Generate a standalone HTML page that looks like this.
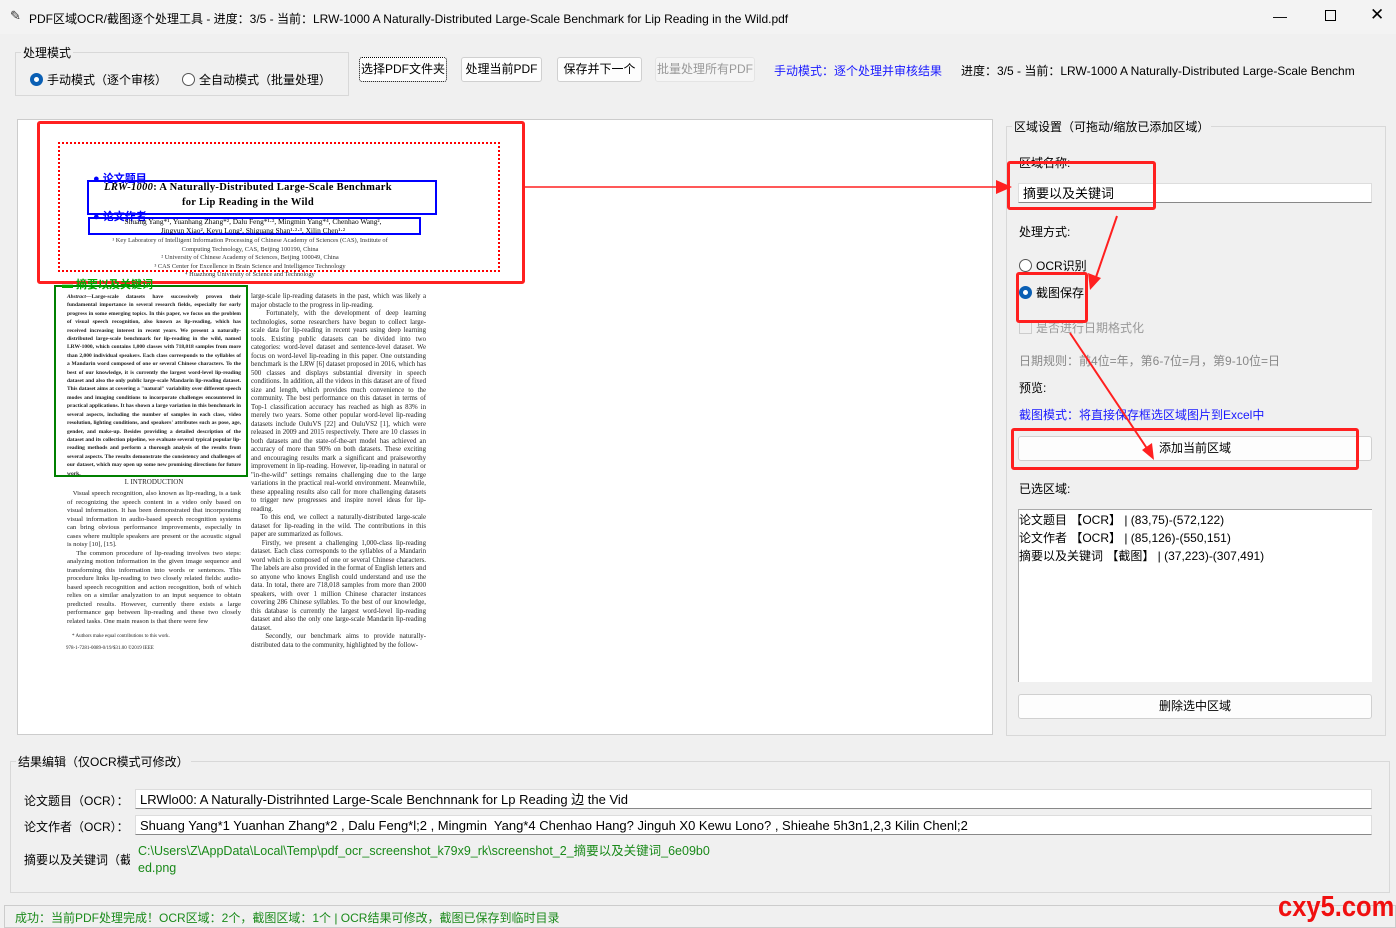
<!DOCTYPE html>
<html><head><meta charset="utf-8"><style>
*{margin:0;padding:0;box-sizing:border-box}
body{width:1396px;height:928px;background:#f0f0f0;font-family:"Liberation Sans","Noto Sans CJK SC",sans-serif;font-size:12px;color:#000;position:relative;overflow:hidden}
.a{position:absolute;white-space:nowrap}
.btn{position:absolute;background:#fdfdfd;border:1px solid #d0d0d0;border-radius:3px;text-align:center;font-size:12px}
.grp{position:absolute;border:1px solid #d8d8d8}
.lg{position:absolute;background:#f0f0f0;padding:0 2px;font-size:12px}
.radio{display:inline-block;width:13px;height:13px;border-radius:50%;border:1px solid #555;vertical-align:-2px;margin-right:4px;background:#fff}
.radio.on{border:4px solid #0a5fb4}
.col{position:absolute;font-family:"Liberation Serif",serif;font-size:6.4px;line-height:8.5px;text-align:justify;color:#222;white-space:normal}
.entry{position:absolute;background:#fff;border:1px solid #ddd;border-bottom:1px solid #888;height:20px;font-size:13px;padding:0 4px;line-height:19px;white-space:nowrap;overflow:hidden}
</style></head><body>
<div class="a" style="left:0;top:0;width:1396px;height:34px;background:#f3f3f3"></div>
<div class="a" style="left:10px;top:8px;font-size:13px;color:#333">✎</div>
<div class="a" style="left:29px;top:10px;font-size:12px">PDF区域OCR/截图逐个处理工具 - 进度：3/5 - 当前：LRW-1000 A Naturally-Distributed Large-Scale Benchmark for Lip Reading in the Wild.pdf</div>
<div class="a" style="left:1273px;top:8px;font-size:14px">—</div>
<div class="a" style="left:1325px;top:10px;width:11px;height:11px;border:1px solid #000"></div>
<div class="a" style="left:1370px;top:5px;font-size:17px">✕</div>

<div class="grp" style="left:15px;top:52px;width:334px;height:44px"></div>
<div class="lg" style="left:21px;top:44px">处理模式</div>
<div class="a" style="left:30px;top:71px"><span class="radio on"></span>手动模式（逐个审核）</div>
<div class="a" style="left:182px;top:71px"><span class="radio"></span>全自动模式（批量处理）</div>

<div class="btn" style="left:359px;top:57px;width:88px;height:25px;line-height:23px;border:1px dotted #000;background:#fdfdfd">选择PDF文件夹</div>
<div class="btn" style="left:461px;top:57px;width:81px;height:25px;line-height:23px">处理当前PDF</div>
<div class="btn" style="left:557px;top:57px;width:85px;height:25px;line-height:23px">保存并下一个</div>
<div class="btn" style="left:655px;top:57px;width:100px;height:25px;line-height:23px;color:#999;background:#f5f5f5;border-color:#e4e4e4">批量处理所有PDF</div>
<div class="a" style="left:774px;top:62px;color:#1a1aff">手动模式：逐个处理并审核结果</div>
<div class="a" style="left:961px;top:62px">进度：3/5 - 当前：LRW-1000 A Naturally-Distributed Large-Scale Benchm</div>

<!-- canvas -->
<div class="a" style="left:17px;top:119px;width:976px;height:616px;background:#fff;border:1px solid #ccc"></div>
<div class="a" style="left:37px;top:121px;width:488px;height:163px;border:3px solid #ff2020;border-radius:3px"></div>
<div class="a" style="left:58px;top:142px;width:442px;height:130px;border:2px dotted #f00"></div>
<div class="a" style="left:87px;top:180px;width:350px;height:35px;border:2px solid #0000ff"></div>
<div class="a" style="left:88px;top:217px;width:333px;height:18px;border:2px solid #0000ff"></div>
<div class="a" style="left:93px;top:170px;color:#00f;font-size:11px;font-weight:bold">● 论文题目</div>
<div class="a" style="left:93px;top:208px;color:#00f;font-size:11px;font-weight:bold">● 论文作者</div>
<div class="a" style="left:92px;top:180px;font-family:'Liberation Serif',serif;font-size:10.5px;font-weight:bold;width:312px;text-align:center;line-height:15px;white-space:normal;letter-spacing:0.3px"><i>LRW-1000</i>: A Naturally-Distributed Large-Scale Benchmark<br>for Lip Reading in the Wild</div>
<div class="a" style="left:88px;top:218px;width:330px;text-align:center;font-family:'Liberation Serif',serif;font-size:7.4px;line-height:8.5px">Shuang Yang*¹, Yuanhang Zhang*², Dalu Feng*¹·², Mingmin Yang*⁴, Chenhao Wang²,<br>Jingyun Xiao², Keyu Long², Shiguang Shan¹·²·³, Xilin Chen¹·²</div>
<div class="a" style="left:80px;top:237px;width:340px;text-align:center;font-family:'Liberation Serif',serif;font-size:6.4px;line-height:8.5px;color:#333">¹ Key Laboratory of Intelligent Information Processing of Chinese Academy of Sciences (CAS), Institute of<br>Computing Technology, CAS, Beijing 100190, China<br>² University of Chinese Academy of Sciences, Beijing 100049, China<br>³ CAS Center for Excellence in Brain Science and Intelligence Technology<br>⁴ Huazhong University of Science and Technology</div>
<div class="a" style="left:54px;top:285px;width:194px;height:192px;border:2px solid #008000"></div>
<div class="a" style="left:62px;top:276px;color:#0a0;font-size:11px;font-weight:bold">▬ 摘要以及关键词</div>
<div class="col" style="left:67px;top:293px;width:174px;font-weight:bold;font-size:5.5px;line-height:8.4px"><i>Abstract</i>—Large-scale datasets have successively proven their fundamental importance in several research fields, especially for early progress in some emerging topics. In this paper, we focus on the problem of visual speech recognition, also known as lip-reading, which has received increasing interest in recent years. We present a naturally-distributed large-scale benchmark for lip-reading in the wild, named LRW-1000, which contains 1,000 classes with 718,018 samples from more than 2,000 individual speakers. Each class corresponds to the syllables of a Mandarin word composed of one or several Chinese characters. To the best of our knowledge, it is currently the largest word-level lip-reading dataset and also the only public large-scale Mandarin lip-reading dataset. This dataset aims at covering a "natural" variability over different speech modes and imaging conditions to incorporate challenges encountered in practical applications. It has shown a large variation in this benchmark in several aspects, including the number of samples in each class, video resolution, lighting conditions, and speakers' attributes such as pose, age, gender, and make-up. Besides providing a detailed description of the dataset and its collection pipeline, we evaluate several typical popular lip-reading methods and perform a thorough analysis of the results from several aspects. The results demonstrate the consistency and challenges of our dataset, which may open up some new promising directions for future work.</div>
<div class="col" style="left:67px;top:478px;width:174px;text-align:center;font-size:7px">I. INTRODUCTION</div>
<div class="col" style="left:67px;top:490px;width:174px;font-size:6.7px">&nbsp;&nbsp;&nbsp;Visual speech recognition, also known as lip-reading, is a task of recognizing the speech content in a video only based on visual information. It has been demonstrated that incorporating visual information in audio-based speech recognition systems can bring obvious performance improvements, especially in cases where multiple speakers are present or the acoustic signal is noisy [10], [15].<br>&nbsp;&nbsp;&nbsp;The common procedure of lip-reading involves two steps: analyzing motion information in the given image sequence and transforming this information into words or sentences. This procedure links lip-reading to two closely related fields: audio-based speech recognition and action recognition, both of which relies on a similar analyzation to an input sequence to obtain predicted results. However, currently there exists a large performance gap between lip-reading and these two closely related tasks. One main reason is that there were few</div>
<div class="col" style="left:72px;top:633px;width:174px;font-size:5px">* Authors make equal contributions to this work.</div>
<div class="col" style="left:66px;top:645px;width:174px;font-size:5px">978-1-7281-0089-0/19/$31.00 ©2019 IEEE</div>
<div class="col" style="left:251px;top:293px;width:175px;font-size:6.85px">large-scale lip-reading datasets in the past, which was likely a major obstacle to the progress in lip-reading.<br>&nbsp;&nbsp;&nbsp;Fortunately, with the development of deep learning technologies, some researchers have begun to collect large-scale data for lip-reading in recent years using deep learning tools. Existing public datasets can be divided into two categories: word-level dataset and sentence-level dataset. We focus on word-level lip-reading in this paper. One outstanding benchmark is the LRW [6] dataset proposed in 2016, which has 500 classes and displays substantial diversity in speech conditions. In addition, all the videos in this dataset are of fixed size and length, which provides much convenience to the community. The best performance on this dataset in terms of Top-1 classification accuracy has reached as high as 83% in merely two years. Some other popular word-level lip-reading datasets include OuluVS [22] and OuluVS2 [1], which were released in 2009 and 2015 respectively. There are 10 classes in both datasets and the state-of-the-art model has achieved an accuracy of more than 90% on both datasets. These exciting and encouraging results mark a significant and praiseworthy improvement in lip-reading. However, lip-reading in natural or "in-the-wild" settings remains challenging due to the large variations in the practical real-world environment. Meanwhile, these appealing results also call for more challenging datasets to trigger new progresses and inspire novel ideas for lip-reading.<br>&nbsp;&nbsp;&nbsp;To this end, we collect a naturally-distributed large-scale dataset for lip-reading in the wild. The contributions in this paper are summarized as follows.<br>&nbsp;&nbsp;&nbsp;Firstly, we present a challenging 1,000-class lip-reading dataset. Each class corresponds to the syllables of a Mandarin word which is composed of one or several Chinese characters. The labels are also provided in the format of English letters and so anyone who knows English could understand and use the data. In total, there are 718,018 samples from more than 2000 speakers, with over 1 million Chinese character instances covering 286 Chinese syllables. To the best of our knowledge, this database is currently the largest word-level lip-reading dataset and also the only one large-scale Mandarin lip-reading dataset.<br>&nbsp;&nbsp;&nbsp;Secondly, our benchmark aims to provide naturally-distributed data to the community, highlighted by the follow-</div>

<!-- right panel -->
<div class="grp" style="left:1006px;top:126px;width:380px;height:610px"></div>
<div class="lg" style="left:1012px;top:118px">区域设置（可拖动/缩放已添加区域）</div>
<div class="a" style="left:1019px;top:154px">区域名称:</div>
<div class="entry" style="left:1018px;top:183px;width:354px">摘要以及关键词</div>
<div class="a" style="left:1019px;top:223px">处理方式:</div>
<div class="a" style="left:1019px;top:257px"><span class="radio"></span>OCR识别</div>
<div class="a" style="left:1019px;top:284px"><span class="radio on"></span>截图保存</div>
<div class="a" style="left:1019px;top:319px;color:#999"><span style="display:inline-block;width:13px;height:13px;border:1px solid #ccc;vertical-align:-2px;margin-right:4px"></span>是否进行日期格式化</div>
<div class="a" style="left:1019px;top:352px;color:#888">日期规则：前4位=年，第6-7位=月，第9-10位=日</div>
<div class="a" style="left:1019px;top:379px">预览:</div>
<div class="a" style="left:1019px;top:406px;color:#1a1aff">截图模式：将直接保存框选区域图片到Excel中</div>
<div class="btn" style="left:1018px;top:436px;width:354px;height:25px;line-height:23px">添加当前区域</div>
<div class="a" style="left:1019px;top:480px">已选区域:</div>
<div class="a" style="left:1018px;top:509px;width:354px;height:173px;background:#fff;border:1px solid #aaa;border-bottom:none;border-right:none;line-height:18px;padding-top:1px;font-size:12px">论文题目 【OCR】 | (83,75)-(572,122)<br>论文作者 【OCR】 | (85,126)-(550,151)<br>摘要以及关键词 【截图】 | (37,223)-(307,491)</div>
<div class="btn" style="left:1018px;top:694px;width:354px;height:25px;line-height:23px">删除选中区域</div>

<!-- red annotations -->
<div class="a" style="left:1007px;top:161px;width:149px;height:49px;border:3px solid #ff2020;border-radius:3px"></div>
<div class="a" style="left:1016px;top:272px;width:72px;height:51px;border:3px solid #ff2020;border-radius:3px"></div>
<div class="a" style="left:1011px;top:428px;width:348px;height:42px;border:3px solid #ff2020;border-radius:3px"></div>
<svg class="a" style="left:0;top:0" width="1396" height="928">
<g stroke="#ff2020" fill="#ff2020">
<line x1="525" y1="187" x2="1000" y2="187" stroke-width="1.5"/>
<polygon points="1012,187 996,180 996,194" stroke="none"/>
<line x1="1117" y1="216" x2="1095" y2="280" stroke-width="2"/>
<polygon points="1090,290 1088,273 1101,278" stroke="none"/>
<line x1="1070" y1="333" x2="1148" y2="450" stroke-width="2"/>
<polygon points="1154,460 1142,450 1152,443" stroke="none"/>
</g></svg>

<!-- results -->
<div class="grp" style="left:10px;top:761px;width:1380px;height:132px"></div>
<div class="lg" style="left:16px;top:753px">结果编辑（仅OCR模式可修改）</div>
<div class="a" style="left:24px;top:792px">论文题目（OCR）：</div>
<div class="entry" style="left:135px;top:789px;width:1237px">LRWlo00: A Naturally-Distrihnted Large-Scale Benchnnank for Lp Reading 边 the Vid</div>
<div class="a" style="left:24px;top:818px">论文作者（OCR）：</div>
<div class="entry" style="left:135px;top:815px;width:1237px">Shuang Yang*1 Yuanhan Zhang*2 , Dalu Feng*l;2 , Mingmin&nbsp; Yang*4 Chenhao Hang? Jinguh X0 Kewu Lono? , Shieahe 5h3n1,2,3 Kilin Chenl;2</div>
<div class="a" style="left:24px;top:851px;width:106px;overflow:hidden">摘要以及关键词（截图）</div>
<div class="a" style="left:138px;top:843px;color:#1a8a1a;font-size:12.5px;line-height:17px">C:\Users\Z\AppData\Local\Temp\pdf_ocr_screenshot_k79x9_rk\screenshot_2_摘要以及关键词_6e09b0<br>ed.png</div>

<div class="a" style="left:4px;top:905px;width:1392px;height:23px;border:1px solid #ccc;background:#f0f0f0"></div>
<div class="a" style="left:15px;top:909px;color:#1a8a1a">成功：当前PDF处理完成！OCR区域：2个，截图区域：1个 | OCR结果可修改，截图已保存到临时目录</div>
<div class="a" style="left:1278px;top:891px;color:#f01010;font-size:29px;font-weight:bold;font-family:'Liberation Sans',sans-serif;transform:scaleX(0.88);transform-origin:0 0">cxy5.com</div>
</body></html>
